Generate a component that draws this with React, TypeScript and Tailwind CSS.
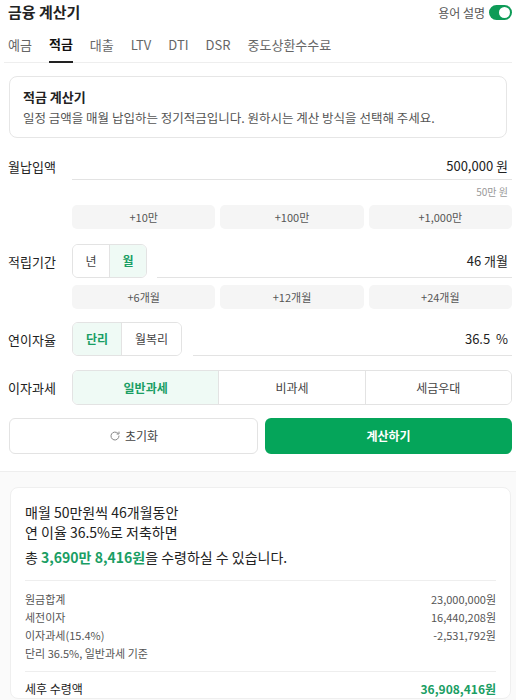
import React from 'react'

const font = { fontFamily: '"Noto Sans CJK KR", "Noto Sans", sans-serif' }

function QuickButtons({ items }: { items: string[] }) {
  return (
    <div className="grid grid-cols-3 gap-[5px] pl-[64px]">
      {items.map((t) => (
        <button
          key={t}
          className="h-[24px] rounded-[5px] bg-[#f5f5f5] text-[11px] text-[#555]"
        >
          {t}
        </button>
      ))}
    </div>
  )
}

function Segment({
  options,
  active,
  widths,
  className,
}: {
  options: string[]
  active: number
  widths?: string[]
  className?: string
}) {
  return (
    <div className={`flex h-[34px] overflow-hidden rounded-[6px] border border-[#e3e3e3] ${className ?? ''}`}>
      {options.map((o, i) => (
        <div
          key={o}
          className={`flex items-center justify-center whitespace-nowrap text-[12px] ${
            widths ? widths[i] : 'flex-1'
          } ${i > 0 ? 'border-l border-[#e3e3e3]' : ''} ${
            i === active ? 'bg-[#effaf5] font-bold text-[#1a9e64]' : 'bg-white text-[#444]'
          }`}
        >
          {o}
        </div>
      ))}
    </div>
  )
}

export default function App() {
  const tabs = ['예금', '적금', '대출', 'LTV', 'DTI', 'DSR', '중도상환수수료']
  return (
    <div className="w-[516px] h-[700px] overflow-hidden bg-white text-[#222]" style={font}>
      {/* header */}
      <div className="flex h-[25px] items-center justify-between pl-2 pr-1">
        <h1 className="text-[15px] font-bold">금융 계산기</h1>
        <div className="flex items-center gap-1">
          <span className="text-[12px] text-[#555]">용어 설명</span>
          <div className="relative h-[15px] w-[23px] rounded-full bg-[#0d9b57]">
            <div className="absolute right-[2px] top-[2px] h-[11px] w-[11px] rounded-full bg-white" />
          </div>
        </div>
      </div>

      {/* tabs */}
      <div className="mx-1 flex h-[38px] items-end gap-[17px] border-b border-[#eee] px-1">
        {tabs.map((t, i) => (
          <div
            key={t}
            className={`pb-[8px] text-[13px] ${
              i === 1 ? 'border-b-2 border-[#222] font-bold text-[#111] -mb-px' : 'text-[#666]'
            }`}
          >
            {t}
          </div>
        ))}
      </div>

      {/* info card */}
      <div className="mx-[9px] mt-[13px] rounded-[8px] border border-[#e6e6e6] px-[13px] pb-[10px] pt-[10px]">
        <div className="text-[13px] font-bold text-[#222]">적금 계산기</div>
        <div className="mt-[2px] text-[12.5px] text-[#555]">
          일정 금액을 매월 납입하는 정기적금입니다. 원하시는 계산 방식을 선택해 주세요.
        </div>
      </div>

      <div className="pl-2 pr-1">
        {/* monthly payment */}
        <div className="mt-[14px] flex items-center">
          <div className="w-[64px] text-[13px]">월납입액</div>
          <div className="flex h-[28px] flex-1 items-center justify-end border-b border-[#e3e3e3] pr-1 text-[13px]">
            500,000 원
          </div>
        </div>
        <div className="mt-[4px] pr-1 text-right text-[10px] text-[#999]">50만 원</div>
        <div className="mt-[6px]">
          <QuickButtons items={['+10만', '+100만', '+1,000만']} />
        </div>

        {/* period */}
        <div className="mt-[15px] flex items-center">
          <div className="w-[64px] text-[13px]">적립기간</div>
          <Segment options={['년', '월']} active={1} widths={['w-[36px]', 'w-[37px]']} />
          <div className="ml-[10px] flex h-[34px] flex-1 items-center justify-end border-b border-[#e3e3e3] pr-1 text-[13px]">
            46 개월
          </div>
        </div>
        <div className="mt-[7px]">
          <QuickButtons items={['+6개월', '+12개월', '+24개월']} />
        </div>

        {/* rate */}
        <div className="mt-[13px] flex items-center">
          <div className="w-[64px] text-[13px]">연이자율</div>
          <Segment options={['단리', '월복리']} active={0} widths={['w-[48px]', 'w-[60px]']} />
          <div className="ml-[11px] flex h-[34px] flex-1 items-center justify-end border-b border-[#e3e3e3] pr-1 text-[13px]">
            36.5&nbsp;&nbsp;%
          </div>
        </div>

        {/* tax */}
        <div className="mt-[14px] flex items-center">
          <div className="w-[64px] text-[13px]">이자과세</div>
          <Segment options={['일반과세', '비과세', '세금우대']} active={0} className="flex-1 h-[35px]" />
        </div>

        {/* actions */}
        <div className="mt-[13px] flex gap-[7px] pl-[1px]">
          <button className="flex h-[36px] flex-1 items-center justify-center gap-1 rounded-[6px] border border-[#e3e3e3] bg-white text-[12px] text-[#444]">
            <svg width="12" height="12" viewBox="0 0 24 24" fill="none" stroke="#888" strokeWidth="2" strokeLinecap="round">
              <path d="M20 12a8 8 0 1 1-2.34-5.66" />
              <path d="M20 4v4h-4" />
            </svg>
            초기화
          </button>
          <button className="flex h-[36px] flex-1 items-center justify-center rounded-[6px] bg-[#05a55a] text-[12px] font-bold text-white">
            계산하기
          </button>
        </div>
      </div>

      {/* result */}
      <div className="mt-[17px] h-[300px] border-t border-[#eee] bg-[#fafafa] pl-[10px] pr-[5px] pt-[15px]">
        <div className="rounded-[8px] border border-[#efefef] bg-white px-[14px] pt-[14px]">
          <div className="text-[14px] leading-[20px] text-[#222]">
            <div>매월 50만원씩 46개월동안</div>
            <div>연 이율 36.5%로 저축하면</div>
            <div className="mt-[5px]">
              총 <span className="font-bold text-[#1a9e64]">3,690만 8,416원</span>을 수령하실 수 있습니다.
            </div>
          </div>
          <div className="mt-[13px] border-t border-[#eee] pt-[9px] text-[11px] leading-[18px] text-[#555]">
            <div className="flex justify-between">
              <span>원금합계</span>
              <span>23,000,000원</span>
            </div>
            <div className="flex justify-between">
              <span>세전이자</span>
              <span>16,440,208원</span>
            </div>
            <div className="flex justify-between">
              <span>이자과세(15.4%)</span>
              <span>-2,531,792원</span>
            </div>
            <div>단리 36.5%, 일반과세 기준</div>
          </div>
          <div className="mt-[9px] flex justify-between border-t border-[#eee] pt-[8px] text-[12px]">
            <span className="text-[#222]">세후 수령액</span>
            <span className="font-bold text-[#1a9e64]">36,908,416원</span>
          </div>
        </div>
      </div>
    </div>
  )
}
